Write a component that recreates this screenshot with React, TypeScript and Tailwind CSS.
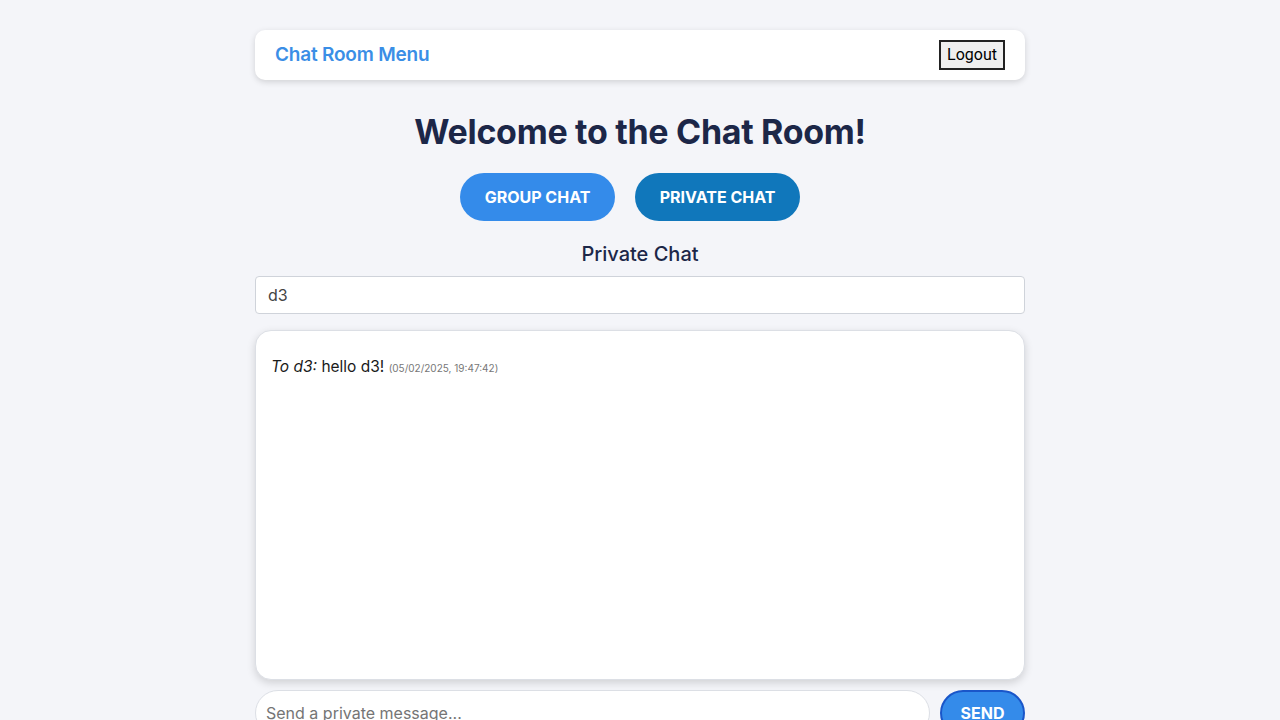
import React, { useState } from "react";

const font = { fontFamily: "Inter, 'Noto Sans', sans-serif" };

const App: React.FC = () => {
    const [mode, setMode] = useState<"group" | "private">("private");
    const [recipient, setRecipient] = useState("d3");
    const [draft, setDraft] = useState("");

    return (
        <div className="min-h-screen bg-[#f4f5f9]" style={font}>
            <div className="w-[770px] mx-auto pt-[30px] flex flex-col">
                <nav className="h-[50px] bg-white rounded-[10px] shadow-[0_2px_6px_rgba(0,0,0,0.15)] flex items-center justify-between px-5">
                    <span className="text-[19px] font-semibold text-[#3a8ee6] tracking-[-0.2px]">Chat Room Menu</span>
                    <button className="h-[30px] px-[6px] border-2 border-[#222] bg-[#efefef] text-[16px] text-black font-['Roboto',sans-serif]">
                        Logout
                    </button>
                </nav>

                <h1 className="mt-[30px] text-center text-[34px] leading-[44px] font-bold text-[#1c2748] tracking-[-0.3px]">
                    Welcome to the Chat Room!
                </h1>

                <div className="mt-[19px] flex justify-center">
                    <button
                        onClick={() => setMode("group")}
                        className="h-12 w-[155px] mr-5 rounded-full bg-[#348bea] text-white font-bold text-[16px] uppercase"
                    >
                        Group Chat
                    </button>
                    <button
                        onClick={() => setMode("private")}
                        className="h-12 w-[165px] mr-5 rounded-full bg-[#1077bb] text-white font-bold text-[16px] uppercase"
                    >
                        Private Chat
                    </button>
                </div>

                <h2 className="mt-[20px] text-center text-[20px] leading-[26px] font-medium text-[#1c2748]">
                    {mode === "private" ? "Private Chat" : "Group Chat"}
                </h2>

                <input
                    value={recipient}
                    onChange={e => setRecipient(e.target.value)}
                    className="mt-[9px] h-[38px] w-full bg-white border border-[#cfd3da] rounded-[4px] px-3 text-[16px] text-[#444] outline-none"
                />

                <div className="mt-[16px] h-[350px] bg-white border border-[#dcdfe5] rounded-[16px] shadow-[0_3px_8px_rgba(0,0,0,0.15)] px-[15px] pt-[24px]">
                    <p className="text-[15.5px] text-[#1a1a1a]">
                        <em>To d3:</em> hello d3!{" "}
                        <span className="text-[10px] text-[#777]">(05/02/2025, 19:47:42)</span>
                    </p>
                </div>

                <div className="mt-[10px] flex gap-[10px]">
                    <input
                        value={draft}
                        onChange={e => setDraft(e.target.value)}
                        placeholder="Send a private message..."
                        className="flex-1 h-[46px] bg-white border border-[#dcdfe5] rounded-full px-[10px] text-[16px] text-[#333] placeholder:text-[#757575] outline-none"
                    />
                    <button className="w-[85px] h-[46px] rounded-full bg-[#348bea] border-2 border-[#1a56c9] text-white font-bold text-[16px]">
                        SEND
                    </button>
                </div>
            </div>
        </div>
    );
};

export default App;
